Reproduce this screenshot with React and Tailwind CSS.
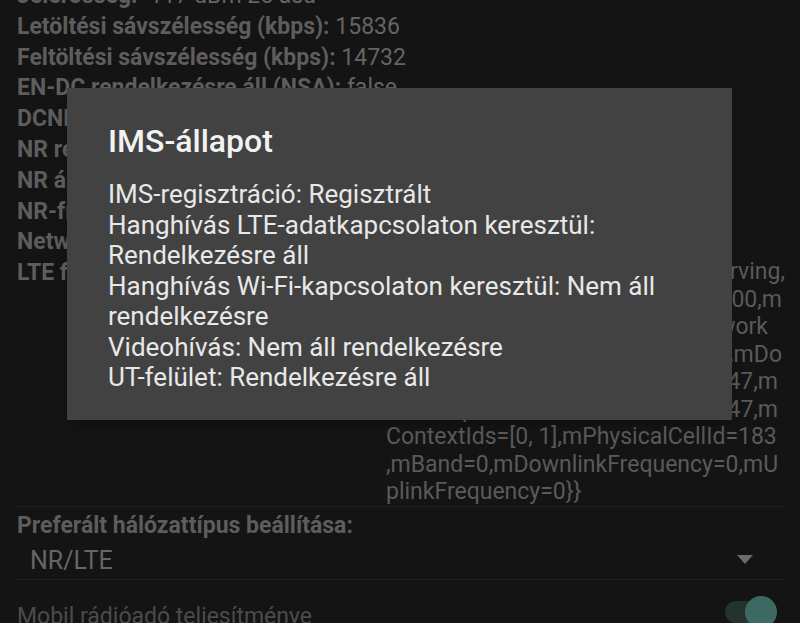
import React from 'react';

const rows = [
    ['Jelerősség:', '-117 dBm   25 asu'],
    ['Letöltési sávszélesség (kbps):', '15836'],
    ['Feltöltési sávszélesség (kbps):', '14732'],
    ['EN-DC rendelkezésre áll (NSA):', 'false'],
    ['DCNR korlátozva (NSA):', 'false'],
    ['NR regisztrálva (NSA):', 'false'],
    ['NR állapot (NSA):', 'NONE'],
    ['NR-frekvencia (NSA):', 'UNKNOWN'],
    ['Network Slicing Config:', ''],
];

const imsLines = [
    'IMS-regisztráció: Regisztrált',
    'Hanghívás LTE-adatkapcsolaton keresztül: Rendelkezésre áll',
    'Hanghívás Wi-Fi-kapcsolaton keresztül: Nem áll rendelkezésre',
    'Videohívás: Nem áll rendelkezésre',
    'UT-felület: Rendelkezésre áll',
];

const App = () => {
    return (
        <div className="relative w-[800px] h-[623px] overflow-hidden bg-[#141414] font-['Roboto',sans-serif]">
            {/* Radio info list (dimmed behind the dialog) */}
            <div className="mt-[-19px] px-[17px] text-[23px]">
                {rows.map(([label, value]) => (
                    <div key={label} className="leading-[30.8px] whitespace-nowrap">
                        <span className="font-bold text-[#5d5d5d]">{label}</span>{' '}
                        <span className="text-[#646464]">{value}</span>
                    </div>
                ))}
                <div className="flex">
                    <div className="w-[369px] shrink-0 font-bold text-[#5d5d5d] leading-[30.8px]">LTE fizikai csatorna konfigurációja:</div>
                    <div className="text-[#5a5a5a] leading-[27.5px] whitespace-nowrap">
                        {/* wrapped lines, the first six end under the dialog edge */}
                        <div className="w-[399px] flex justify-end">{'{mConnectionStatus=PrimaryServing,'}</div>
                        <div className="w-[396px] flex justify-end">mCellBandwidthDownlinkKhz=20000,m</div>
                        <div className="w-[382px] flex justify-end">CellBandwidthUplinkKhz=0,mNetwork</div>
                        <div className="w-[396px] flex justify-end">Type=LTE,mFrequencyRange=0,mDo</div>
                        <div className="w-[392px] flex justify-end">wnlinkChannelNumber=1847,m</div>
                        <div className="w-[392px] flex justify-end">UplinkChannelNumber=19847,m</div>
                        <div>ContextIds=[0, 1],mPhysicalCellId=183</div>
                        <div>,mBand=0,mDownlinkFrequency=0,mU</div>
                        <div>{'plinkFrequency=0}}'}</div>
                    </div>
                </div>
                <div className="h-px bg-[#222222]" />

                <div className="mt-[4px] leading-[30.8px] font-bold text-[#5d5d5d]">Preferált hálózattípus beállítása:</div>
                <div className="flex items-center justify-between pl-[13px] pr-[30px]">
                    <span className="mt-[2px] text-[25px] leading-[36px] text-[#666666]">NR/LTE</span>
                    <svg width="16" height="9" viewBox="0 0 16 9" className="mt-[-1px]">
                        <polygon points="0,0 16,0 8,9" fill="#6b6b6b" />
                    </svg>
                </div>
                <div className="h-px bg-[#222222]" />

                <div className="flex items-start justify-between pt-[22px] pr-[6px]">
                    <span className="leading-[30.8px] text-[#4b4b4b]">Mobil rádióadó teljesítménye</span>
                    <div className="relative mt-[-6px] w-[52px] h-[32px] flex items-center">
                        <div className="w-[44px] h-[22px] rounded-full bg-[#25332f]" />
                        <div className="absolute right-0 top-0 w-[32px] h-[32px] rounded-full bg-[#3d6963]" />
                    </div>
                </div>
            </div>

            {/* IMS status dialog */}
            <div className="absolute left-[67px] top-[88px] w-[665px] bg-[#424242] px-[41px] pt-[35px] pb-[27px] shadow-lg">
                <h2 className="text-[32px] leading-[36px] font-medium text-[#f2f2f2]">IMS-állapot</h2>
                <div className="mt-[20px] text-[26px] leading-[30.5px] text-[#e8e8e8]">
                    {imsLines.map((l) => (
                        <div key={l}>{l}</div>
                    ))}
                </div>
            </div>
        </div>
    );
};

export default App;
